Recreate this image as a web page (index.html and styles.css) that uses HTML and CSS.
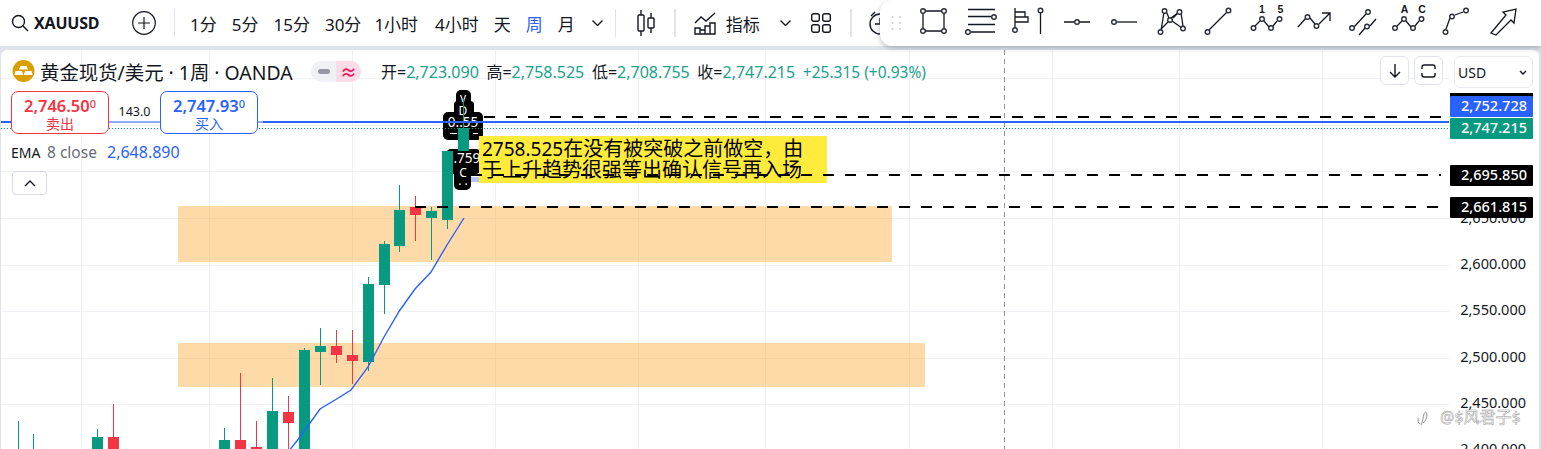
FILE: index.html
```html
<!DOCTYPE html>
<html lang="zh">
<head>
<meta charset="utf-8">
<title>XAUUSD</title>
<link rel="stylesheet" href="styles.css">
</head>
<body>
<header class="topbar">
  <div class="symbol">
    <svg class="ic" width="18" height="18" viewBox="0 0 18 18"><circle cx="7.5" cy="7.5" r="6"/><path d="M12 12l5 5"/></svg>
    <span class="symbol-name">XAUUSD</span>
  </div>
  <svg class="ic add" width="24" height="24" viewBox="0 0 24 24"><circle cx="12" cy="12" r="11.3"/><path d="M12 6v12M6 12h12"/></svg>
  <i class="sep sep-first"></i>
  <nav class="times">
    <span>1分</span><span>5分</span><span>15分</span><span>30分</span><span class="hr1">1小时</span><span>4小时</span><span>天</span><span class="active">周</span><span>月</span>
  </nav>
  <svg class="ic chev chev-time" width="11" height="6" viewBox="0 0 11 6"><path d="M.5.5l5 5 5-5"/></svg>
  <i class="sep sep-time"></i>
  <svg class="ic candles" width="18" height="28" viewBox="0 0 18 28"><path d="M4 1v5M4 22v5M14 4v5M14 19v5"/><rect x="1" y="6" width="6" height="16" rx="1"/><rect x="11" y="9" width="6" height="10" rx="1"/></svg>
  <i class="sep sep-candle"></i>
  <svg class="ic indicator" width="23" height="24" viewBox="0 0 23 24"><path d="M1 12l6-6 5 4 9-8"/><path d="M1 23v-6h5v6zM6 23v-4h5v4zM11 23v-8h5v8zM16 23v-11h5v11z"/></svg>
  <span class="ind-label">指标</span>
  <svg class="ic chev chev-ind" width="11" height="6" viewBox="0 0 11 6"><path d="M.5.5l5 5 5-5"/></svg>
  <svg class="ic layout" width="20" height="20" viewBox="0 0 20 20"><rect x=".7" y=".7" width="7.6" height="7.6" rx="2"/><rect x="11.7" y=".7" width="7.6" height="7.6" rx="2"/><rect x=".7" y="11.7" width="7.6" height="7.6" rx="2"/><rect x="11.7" y="11.7" width="7.6" height="7.6" rx="2"/></svg>
  <i class="sep sep-layout"></i>
  <svg class="ic clock" width="22" height="24" viewBox="0 0 22 24"><circle cx="11" cy="13" r="10"/><path d="M11 7v6H6M2 5l4-4"/></svg>
</header>

<aside class="drawbar">
  <svg class="grip" width="11" height="16" viewBox="0 0 11 16"><circle cx="1.500" cy="2" r="1"/><circle cx="9" cy="2" r="1"/><circle cx="1.500" cy="8" r="1"/><circle cx="9" cy="8" r="1"/><circle cx="1.500" cy="14" r="1"/><circle cx="9" cy="14" r="1"/></svg>
  <svg class="dt w46" viewBox="910 0 46 46"><path d="M924 11h19M924 31h19M923 13.500v15M944 13.500v15"/><circle cx="923" cy="11" r="2.300"/><circle cx="944" cy="11" r="2.300"/><circle cx="923" cy="31" r="2.300"/><circle cx="944" cy="31" r="2.300"/></svg>
  <svg class="dt w47" viewBox="956 0 47 46"><path d="M968 9.500h27M968 16.500h23M968 24.500h27M971 32h24"/><circle cx="994" cy="17" r="2.300"/><circle cx="968" cy="32" r="2.300"/></svg>
  <svg class="dt w33" viewBox="1003 0 33 46"><path d="M1015 8v20M1015 12h10v5h-10M1015 17h13v5h-13M1015 22h7"/><circle cx="1015" cy="30" r="2.300"/></svg>
  <svg class="dt w23" viewBox="1036 0 23 46"><path d="M1040.500 13v21"/><circle cx="1040.500" cy="10.500" r="2.300"/></svg>
  <svg class="dt w40" viewBox="1059 0 40 46"><path d="M1064 22h10M1079 22h11"/><circle cx="1077" cy="22" r="2.300"/></svg>
  <svg class="dt w44" viewBox="1099 0 44 46"><path d="M1117 22h20"/><circle cx="1114" cy="22" r="2.300"/></svg>
  <svg class="dt w54" viewBox="1143 0 54 46"><path d="M1161 31l3-19M1166 11l3 7M1173 18l5-5M1181 13l2 13M1172 21l10 7M1160 30l9-9M1179 12l-8 6"/><circle cx="1160.500" cy="32" r="2.300"/><circle cx="1164.500" cy="11" r="2.300"/><circle cx="1170" cy="20" r="2.300"/><circle cx="1179.500" cy="12" r="2.300"/><circle cx="1183" cy="28.500" r="2.300"/></svg>
  <svg class="dt w44b" viewBox="1197 0 44 46"><path d="M1209 30l18-18"/><circle cx="1207.500" cy="32" r="2.300"/><circle cx="1228.500" cy="10.500" r="2.300"/></svg>
  <svg class="dt w50" viewBox="1241 0 50 46"><path d="M1255 26l5-5M1264 21l5 6M1273 26l4-5"/><circle cx="1253.500" cy="28" r="2.300"/><circle cx="1262" cy="19" r="2.300"/><circle cx="1271" cy="28" r="2.300"/><circle cx="1279.500" cy="19" r="2.300"/><text class="dt-t" x="1262" y="13">1</text><text class="dt-t" x="1280.500" y="13">5</text></svg>
  <svg class="dt w51" viewBox="1291 0 51 46"><path d="M1298 27l8-9M1310 18l5 6M1319 24l11-11M1322 13h8v8"/><circle cx="1307.500" cy="17" r="2.300"/><circle cx="1316.500" cy="26" r="2.300"/></svg>
  <svg class="dt w46b" viewBox="1342 0 46 46"><path d="M1354 27l12-13M1359 35l6-7M1370 26l6-7"/><circle cx="1352" cy="28" r="2.300"/><circle cx="1368" cy="12" r="2.300"/><circle cx="1367" cy="26.500" r="2.300"/></svg>
  <svg class="dt w46c" viewBox="1388 0 46 46"><path d="M1397 26l5-5M1406 21l5 6M1415 26l4-5"/><circle cx="1395" cy="28" r="2.300"/><circle cx="1404" cy="19" r="2.300"/><circle cx="1413" cy="28" r="2.300"/><circle cx="1421.500" cy="19" r="2.300"/><text class="dt-t" x="1404.500" y="13">A</text><text class="dt-t" x="1422" y="13">C</text></svg>
  <svg class="dt w46d" viewBox="1434 0 46 46"><path d="M1446 29l4-11M1455 15l8-3"/><circle cx="1445.500" cy="32" r="2.300"/><circle cx="1452" cy="16.500" r="2.300"/><circle cx="1466" cy="10.500" r="2.300"/></svg>
  <svg class="dt w61" viewBox="1480 0 61 46"><path d="M1491 33l15-18-3-3 13-3-2 14-3-3-15 15z"/></svg>
</aside>

<main class="chart">
  <svg class="plot" viewBox="1 50 1538 399" preserveAspectRatio="none">
    <g class="grid">
      <rect x="81" y="50" width="1" height="399"/><rect x="209" y="50" width="1" height="399"/><rect x="352" y="50" width="1" height="399"/><rect x="495" y="50" width="1" height="399"/><rect x="638" y="50" width="1" height="399"/><rect x="765" y="50" width="1" height="399"/><rect x="909" y="50" width="1" height="399"/><rect x="1052" y="50" width="1" height="399"/><rect x="1179" y="50" width="1" height="399"/><rect x="1322" y="50" width="1" height="399"/>
      <rect x="1" y="78" width="1448" height="1"/><rect x="1" y="125" width="1448" height="1"/><rect x="1" y="171" width="1448" height="1"/><rect x="1" y="218" width="1448" height="1"/><rect x="1" y="265" width="1448" height="1"/><rect x="1" y="311" width="1448" height="1"/><rect x="1" y="358" width="1448" height="1"/><rect x="1" y="404" width="1448" height="1"/>
    </g>
    <rect class="zone" x="178" y="206" width="714" height="56"/>
    <rect class="zone" x="178" y="343" width="747" height="44"/>
    <path class="cross" d="M1004.500 50V449"/>

    <g class="pill">
      <rect x="456" y="90" width="15" height="26" rx="5"/>
      <rect x="454" y="101" width="20" height="20" rx="4"/>
      <rect x="443" y="112" width="40" height="28" rx="5"/>
      <rect x="446" y="149" width="35" height="25" rx="5"/>
      <rect x="454" y="163" width="17" height="27" rx="5"/>
    </g>
    <g class="pill-text">
      <text x="463" y="102">v</text>
      <text x="463" y="115">D</text>
      <text class="pill-big" x="463" y="127">0..55</text>
      <text class="pill-big" x="463" y="163">0.759</text>
      <text x="463" y="177">C</text>
      <text x="463" y="185">. .</text>
    </g>
    <rect class="pill-tick" x="450" y="133" width="7" height="1"/>
    <rect class="pill-tick" x="473" y="133" width="5" height="1"/>

    <rect class="annot" x="479" y="136" width="348" height="47"/>
    <text class="annot-text" x="482" y="156"><tspan class="annot-num">2758.525</tspan>在没有被突破之前做空，由</text>
    <text class="annot-text" x="482" y="177">于上升趋势很强等出确认信号再入场</text>
    <rect class="tint" x="471" y="177" width="8" height="5"/>

    <g class="up">
      <rect x="18" y="421" width="1" height="30"/><rect x="33" y="434" width="1" height="20"/>
      <rect x="97" y="429" width="1" height="10"/><rect x="92" y="437" width="11" height="14"/>
      <rect x="224" y="428" width="1" height="14"/><rect x="219" y="440" width="11" height="11"/>
      <rect x="272" y="378" width="1" height="40"/><rect x="267" y="411" width="11" height="40"/>
      <rect x="304" y="348" width="1" height="4"/><rect x="299" y="350" width="11" height="101"/>
      <rect x="320" y="328" width="1" height="57"/><rect x="315" y="346" width="11" height="6"/>
      <rect x="368" y="277" width="1" height="94"/><rect x="363" y="284" width="11" height="78"/>
      <rect x="384" y="241" width="1" height="73"/><rect x="379" y="244" width="11" height="41"/>
      <rect x="399" y="185" width="1" height="67"/><rect x="394" y="210" width="11" height="36"/>
      <rect x="431" y="207" width="1" height="53"/><rect x="426" y="211" width="11" height="7"/>
      <rect x="447" y="151" width="1" height="78"/><rect x="442" y="151" width="11" height="69"/>
      <rect x="463" y="99" width="1" height="30"/><rect x="458" y="128" width="11" height="23"/>
    </g>
    <g class="dn">
      <rect x="113" y="404" width="1" height="34"/><rect x="108" y="437" width="11" height="14"/>
      <rect x="240" y="373" width="1" height="70"/><rect x="235" y="440" width="11" height="11"/>
      <rect x="256" y="421" width="1" height="30"/><rect x="251" y="447" width="11" height="4"/>
      <rect x="288" y="396" width="1" height="55"/><rect x="283" y="412" width="11" height="11"/>
      <rect x="336" y="330" width="1" height="33"/><rect x="331" y="346" width="11" height="9"/>
      <rect x="352" y="330" width="1" height="54"/><rect x="347" y="355" width="11" height="6"/>
      <rect x="415" y="196" width="1" height="45"/><rect x="410" y="207" width="11" height="8"/>
    </g>
    <polyline class="ema" points="288,452 300,437 320,409 335,400 351,390 368,367 384,337 400,310 415,289 431,272 447,245 464,218"/>

    <path class="dash" d="M484 117H1441"/>
    <path class="dash" d="M471 175H1441"/>
    <path class="dash" d="M415 207H1441"/>
    <rect class="blue-line" x="1" y="121" width="1448" height="2"/>
    <rect class="blue-light" x="109" y="121" width="51" height="2"/>
    <rect class="blue-light" x="258" y="121" width="5" height="2"/>
    <path class="dot-line" d="M1 128.500H1449"/>

    <g class="ticks">
      <text x="1526" y="223">2,650.000</text>
      <text x="1526" y="269">2,600.000</text>
      <text x="1526" y="315">2,550.000</text>
      <text x="1526" y="362">2,500.000</text>
      <text x="1526" y="408">2,450.000</text>
      <text x="1526" y="454">2,400.000</text>
    </g>
    <rect class="lab-black" x="1450" y="93" width="83" height="6"/>
    <rect class="lab-blue" x="1450" y="96" width="83" height="21" rx="1"/>
    <rect class="lab-green" x="1450" y="118" width="83" height="21" rx="1"/>
    <rect class="lab-black" x="1450" y="165" width="83" height="21" rx="1"/>
    <rect class="lab-black" x="1450" y="197" width="83" height="21" rx="1"/>
    <g class="lab-text">
      <text x="1527" y="111">2,752.728</text>
      <text x="1527" y="133">2,747.215</text>
      <text x="1527" y="180">2,695.850</text>
      <text x="1527" y="212">2,661.815</text>
    </g>
    <path class="wm-logo" d="M1421 425c2-4 2-8 3-11s3-2 3 1-2 7-4 8M1418 418c0 3 0 5 2 6"/>
    <text class="wm" x="1440" y="423">@$风君子$</text>
  </svg>

  <section class="legend">
    <div class="title-row">
      <svg class="logo" width="23" height="22" viewBox="0 0 23 22"><circle cx="11.500" cy="11" r="11" class="logo-bg"/><path class="logo-bar" d="M8.500 6h6l1.500 3.500H7zM3.500 11h6.500l1.300 4H2.500zM13 11h6.500l1 4h-8.800z"/></svg>
      <span class="title">黄金现货/美元 · 1周 · OANDA</span>
      <span class="status"><b class="st-gray"><i></i></b><b class="st-pink">≈</b></span>
      <span class="ohlc">开=<em>2,723.090</em> 高=<em>2,758.525</em> 低=<em>2,708.755</em> 收=<em>2,747.215</em> <em class="chg">+25.315 (+0.93%)</em></span>
    </div>
    <div class="trade-row">
      <div class="trade sell"><strong>2,746.50<sup>0</sup></strong><span>卖出</span></div>
      <span class="spread">143.0</span>
      <div class="trade buy"><strong>2,747.93<sup>0</sup></strong><span>买入</span></div>
    </div>
    <div class="ema-row"><span class="ema-n">EMA</span> <span class="ema-p">8 close</span> <span class="ema-v">2,648.890</span></div>
    <button class="collapse"><svg class="ic" width="12" height="7" viewBox="0 0 12 7"><path d="M1 6l5-5 5 5"/></svg></button>
  </section>

  <section class="controls">
    <button class="ctl"><svg class="ic" width="12" height="15" viewBox="0 0 12 15"><path d="M6 1v13M1 9l5 5 5-5"/></svg></button>
    <button class="ctl"><svg class="ic" width="15" height="14" viewBox="0 0 15 14"><path d="M1 5V3a2 2 0 0 1 2-2h9a2 2 0 0 1 2 2v2M1 9v2a2 2 0 0 0 2 2h9a2 2 0 0 0 2-2V9"/></svg></button>
    <div class="currency"><span>USD</span><svg class="ic" width="8" height="5" viewBox="0 0 8 5"><path d="M1 1l3 3 3-3"/></svg></div>
  </section>
</main>
</body>
</html>
```
FILE: styles.css
```css
* { box-sizing: border-box; }
html, body { margin: 0; height: 100%; }
body {
  width: 1541px;
  height: 449px;
  overflow: hidden;
  position: relative;
  background: #e0e3eb;
  color: #131722;
  font-family: "Noto Sans", "Noto Sans CJK SC", sans-serif;
  display: flex;
  flex-direction: column;
}
.ic { fill: none; stroke: #131722; stroke-width: 1.4; flex: none; display: block; }

/* top bar */
.topbar { height: 46px; flex: none; background: #fff; display: flex; align-items: center; padding-left: 11px; overflow: hidden; }
.symbol { display: flex; align-items: center; gap: 5px; width: 121px; flex: none; }
.symbol-name { font-size: 16px; font-weight: 700; letter-spacing: -.2px; }
.add { stroke-width: 1.2; margin-right: 18px; }
.sep { display: block; flex: none; width: 1px; height: 28px; background: #e0e3eb; }
.sep-candle, .sep-layout { width: 2px; }
.times { display: flex; gap: 15px; margin-left: 15px; font-size: 17px; }
.times .active { color: #2962ff; }
.times .hr1 { margin-left: -2px; margin-right: 2px; }
.chev { margin-left: 17px; margin-right: 12px; }
.candles { margin-left: 21px; margin-right: 19px; }
.indicator { margin-left: 18px; }
.ind-label { font-size: 17px; margin-left: 9px; }
.chev-ind { margin-left: 20px; margin-right: 20px; }
.sep-layout { margin-left: 19px; margin-right: 17px; }

/* floating drawing bar */
.drawbar {
  position: absolute; left: 880px; top: 0; width: 661px; height: 46px;
  background: #fff; border-radius: 12px 0 0 12px;
  box-shadow: 0 2px 5px rgba(60, 65, 80, .35);
  display: flex; align-items: center; padding-left: 11px; z-index: 3;
}
.grip { fill: #c9ccd4; flex: none; margin-right: 8px; }
.dt { height: 46px; flex: none; fill: none; stroke: #131722; stroke-width: 1.3; }
.dt circle { fill: #fff; stroke: #2a2e39; stroke-width: 1.4; }
.dt-t { stroke: none; fill: #131722; font: 700 10.500px "Liberation Sans", sans-serif; text-anchor: middle; }
.w46, .w46b, .w46c, .w46d { width: 46px; }
.w47 { width: 47px; }
.w33 { width: 33px; }
.w23 { width: 23px; }
.w40 { width: 40px; }
.w44, .w44b { width: 44px; }
.w54 { width: 54px; }
.w50 { width: 50px; }
.w51 { width: 51px; }
.w61 { width: 61px; }

/* chart */
.chart { flex: 1; margin: 4px 2px 0 1px; position: relative; overflow: hidden; background: #fff; border-radius: 6px 6px 0 0; }
.plot { position: absolute; inset: 0; width: 100%; height: 100%; display: block; }
.grid rect { fill: #f0f1f4; }
.zone { fill: rgba(252, 168, 50, .42); }
.cross { stroke: #8f929b; stroke-width: 1; stroke-dasharray: 5 4; fill: none; }
.up rect { fill: #089981; }
.dn rect { fill: #f23645; }
.ema { fill: none; stroke: #2962ff; stroke-width: 1.4; }
.dash { fill: none; stroke: #000; stroke-width: 2; stroke-dasharray: 11 11; }
.blue-line { fill: #2962ff; }
.blue-light { fill: #8fa9ff; }
.dot-line { fill: none; stroke: #089981; stroke-width: 1; stroke-dasharray: 1 2; }
.pill rect { fill: #000; }
.pill-text text { fill: #fff; font-size: 12px; text-anchor: middle; }
.pill-text .pill-big { font-size: 13.500px; }
.pill-tick { fill: #fff; }
.annot { fill: #ffeb3b; }
.annot-text { fill: #000; font-size: 20px; }
.annot-num { font-size: 19px; }
.tint { fill: #b3c6ff; }
.ticks text { fill: #131722; font-size: 14.500px; text-anchor: end; }
.lab-black { fill: #000; }
.lab-blue { fill: #2962ff; }
.lab-green { fill: #089981; }
.lab-text text { fill: #fff; font-size: 14.500px; font-weight: 500; text-anchor: end; }
.wm { fill: #fff; stroke: #999; stroke-width: .5; font-size: 16px; }
.wm-logo { fill: none; stroke: #777; stroke-width: .8; }

/* legend */
.legend { position: absolute; left: 0; top: 0; padding: 10px 0 0 10px; }
.title-row { display: flex; align-items: center; height: 22px; white-space: nowrap; margin-left: 1px; }
.logo { flex: none; }
.logo-bg { fill: #d99e00; }
.logo-bar { fill: #fff; }
.title { font-size: 19.400px; margin-left: 5px; width: 271px; flex: none; }
.status { display: flex; height: 21px; width: 50px; border-radius: 10px; overflow: hidden; flex: none; }
.status b { flex: 1; display: flex; align-items: center; justify-content: center; }
.st-gray { background: #f0f1f4; }
.st-gray i { width: 12px; height: 5px; border-radius: 3px; background: #9598a1; }
.st-pink { background: #fbdce7; color: #e91e63; font-size: 17px; }
.ohlc { margin-left: 20px; font-size: 16px; color: #131722; word-spacing: 3.500px; }
.ohlc em { font-style: normal; color: #1aa18a; }
.ohlc .chg { word-spacing: 0; font-size: 15.500px; }
.trade-row { display: flex; align-items: center; margin-top: 9px; height: 43px; }
.trade { width: 98px; height: 43px; border: 1px solid; border-radius: 7px; background: #fff; display: flex; flex-direction: column; align-items: center; line-height: 1; padding-top: 4px; }
.trade strong { font-size: 16.500px; font-weight: 600; line-height: 20px; }
.trade sup { font-size: 11px; vertical-align: 4px; line-height: 0; font-weight: 500; }
.trade span { font-size: 14px; line-height: 16px; }
.sell { border-color: #f23645; color: #f23645; }
.buy { border-color: #2962ff; color: #2962ff; }
.spread { width: 51px; text-align: center; font-size: 12.500px; padding-bottom: 2px; }
.ema-row { margin-top: 8px; height: 20px; line-height: 20px; white-space: nowrap; display: flex; align-items: baseline; }
.ema-n { font-size: 14px; width: 36px; }
.ema-p { color: #6a6d78; font-size: 15.500px; width: 60px; }
.ema-v { color: #2962ff; font-size: 16px; }
.collapse { display: flex; align-items: center; justify-content: center; margin: 9px 0 0 1px; width: 35px; height: 24px; padding: 0; background: #fff; border: 1px solid #d9dbe3; border-radius: 4px; }

/* controls */
.controls { position: absolute; right: 6px; top: 6px; display: flex; align-items: flex-start; }
.ctl { width: 29px; height: 29px; padding: 0; margin-right: 5px; display: flex; align-items: center; justify-content: center; background: #fff; border: 1px solid #e0e3eb; border-radius: 6px; }
.ctl + .ctl { margin-right: 11px; }
.currency { width: 79px; height: 32px; padding: 0 5px 0 3px; display: flex; align-items: center; justify-content: space-between; font-size: 14px; background: #fff; border: 1px solid #e8eaf0; border-radius: 6px; }
```
